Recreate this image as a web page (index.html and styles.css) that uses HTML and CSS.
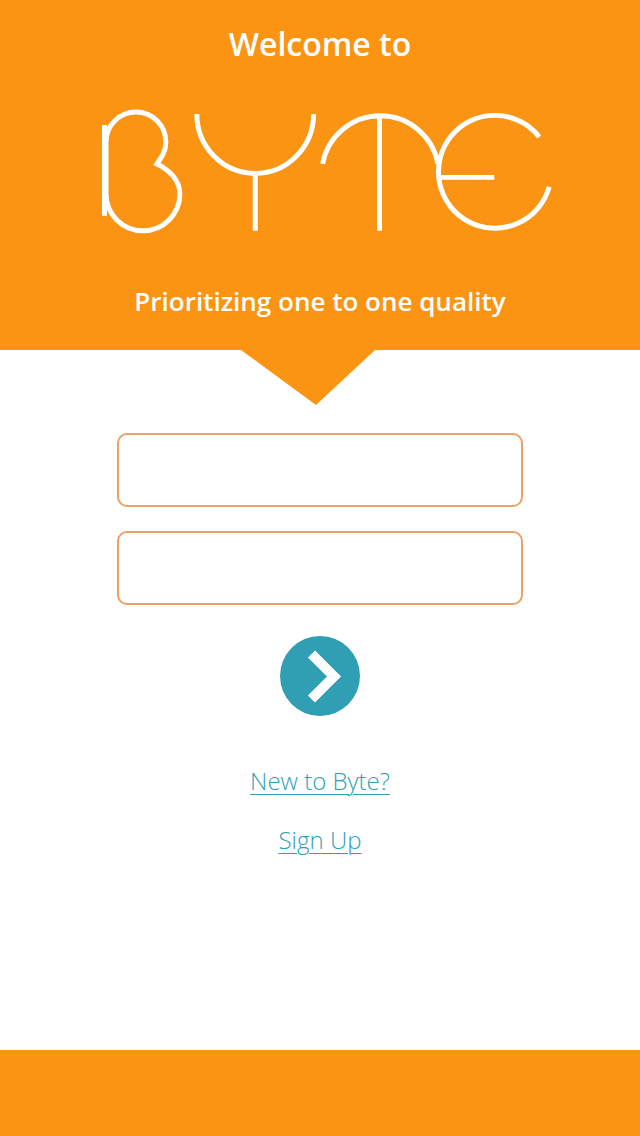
FILE: index.html
```html
<!DOCTYPE html>
<html lang="en">
<head>
  <meta charset="utf-8">
  <meta name="viewport" content="width=device-width, initial-scale=1">
  <title>Byte</title>
  <link rel="stylesheet" href="styles.css">
</head>
<body class="page">
  <header class="hero">
    <p class="welcome">Welcome to</p>
    <h1 class="brand">
      <svg class="logo" viewBox="100 106 454 130" role="img" aria-label="Byte">
        <path d="M104.500 125V216"/>
        <path d="M106 194V142A30 30 0 0 1 166 142C166 151 162 157 157 164C170 170 180 181 180 194A37 37 0 0 1 106 194"/>
        <path d="M197 114A58.500 59.500 0 0 0 314 114M255.500 173V231"/>
        <path d="M323 164A58.700 58.700 0 0 1 438.500 164M380 115V231"/>
        <path d="M540 137A56.500 56.500 0 1 0 550 187M438.500 177.500H495"/>
      </svg>
    </h1>
    <p class="tagline">Prioritizing one to one quality</p>
  </header>
  <main class="content">
    <svg class="pointer" viewBox="0 0 134 55" aria-hidden="true"><path d="M0 0H134L75 55Z"/></svg>
    <form class="login">
      <input class="field" type="text" aria-label="Username" autocomplete="username">
      <input class="field" type="password" aria-label="Password" autocomplete="current-password">
      <button class="submit" type="submit" aria-label="Log in">
        <svg class="chevron" viewBox="0 0 80 80" aria-hidden="true"><path d="M31.500 18L54 40.500L31.500 63"/></svg>
      </button>
    </form>
    <nav class="links">
      <a class="link" href="#new">New to Byte?</a>
      <a class="link" href="#signup">Sign Up</a>
    </nav>
  </main>
  <footer class="footer"></footer>
</body>
</html>
```

FILE: styles.css
```css
* {
  box-sizing: border-box;
}

.page {
  margin: 0;
  min-height: 100vh;
  display: flex;
  flex-direction: column;
  background: #fff;
  font-family: "Open Sans", "Noto Sans", sans-serif;
}

.hero {
  display: flex;
  flex-direction: column;
  align-items: center;
  padding: 20px 0 25px;
  background: #fb9413;
  color: #fff;
  text-align: center;
}

.welcome,
.tagline {
  margin: 0;
  font-weight: 600;
  line-height: 48px;
}

.welcome {
  font-size: 32px;
}

.tagline {
  font-size: 26px;
}

.brand {
  width: 73%;
  margin: 38px 0 41px;
  padding-left: 14px;
  line-height: 0;
}

.logo {
  width: 100%;
  fill: none;
  stroke: #fff;
  stroke-width: 5;
}

.content {
  flex: 1;
  display: flex;
  flex-direction: column;
  align-items: center;
}

.pointer {
  width: 134px;
  height: 55px;
  margin-right: 24px;
  fill: #fb9413;
}

.login {
  width: 100%;
  display: flex;
  flex-direction: column;
  align-items: center;
  gap: 24px;
  padding: 28px 16px 0;
}

.field {
  width: 100%;
  max-width: 406px;
  height: 74px;
  padding: 0 16px;
  border: 2px solid #eba168;
  border-radius: 10px;
  background: #fff;
  font: inherit;
  font-size: 26px;
}

.submit {
  width: 80px;
  height: 80px;
  margin-top: 7px;
  padding: 0;
  border: 0;
  border-radius: 50%;
  background: #309fb4;
  cursor: pointer;
}

.chevron {
  display: block;
  fill: none;
  stroke: #fff;
  stroke-width: 10;
}

.links {
  display: flex;
  flex-direction: column;
  align-items: center;
  gap: 23px;
  padding: 47px 16px;
}

.link {
  color: #309fb4;
  font-size: 24px;
  font-weight: 300;
  line-height: 36px;
  text-decoration-thickness: 1px;
  text-underline-offset: 4px;
}

.footer {
  height: 86px;
  background: #fb9413;
}
```
